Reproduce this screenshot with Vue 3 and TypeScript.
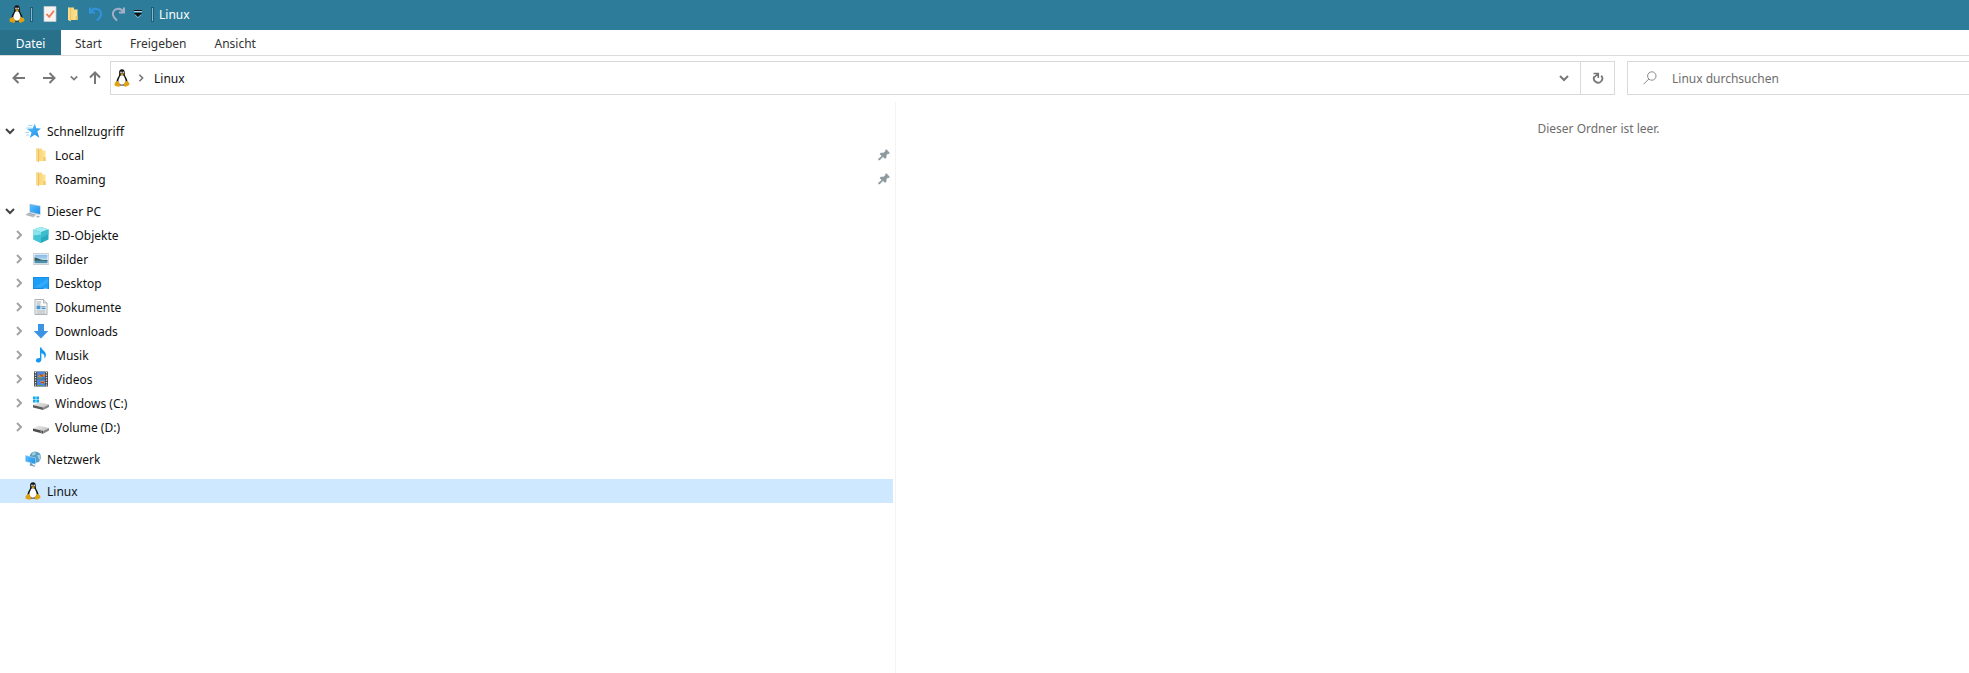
<script setup lang="ts">
import { ref } from 'vue'

interface TreeItem {
  label: string
  icon: string
  pinned?: boolean
  expandable?: boolean
}

interface TreeGroup extends TreeItem {
  open?: boolean
  children: TreeItem[]
}

const tabs: string[] = ['Start', 'Freigeben', 'Ansicht']
const selected = ref('Linux')
const search = ref('')

const groups = ref<TreeGroup[]>([
  {
    label: 'Schnellzugriff',
    icon: 'star',
    open: true,
    expandable: true,
    children: [
      { label: 'Local', icon: 'folder', pinned: true },
      { label: 'Roaming', icon: 'folder', pinned: true },
    ],
  },
  {
    label: 'Dieser PC',
    icon: 'pc',
    open: true,
    expandable: true,
    children: [
      { label: '3D-Objekte', icon: 'cube', expandable: true },
      { label: 'Bilder', icon: 'picture', expandable: true },
      { label: 'Desktop', icon: 'desktop', expandable: true },
      { label: 'Dokumente', icon: 'document', expandable: true },
      { label: 'Downloads', icon: 'download', expandable: true },
      { label: 'Musik', icon: 'music', expandable: true },
      { label: 'Videos', icon: 'video', expandable: true },
      { label: 'Windows (C:)', icon: 'drive-win', expandable: true },
      { label: 'Volume (D:)', icon: 'drive', expandable: true },
    ],
  },
  { label: 'Netzwerk', icon: 'network', children: [] },
  { label: 'Linux', icon: 'tux', children: [] },
])
</script>

<template>
  <div class="explorer">
    <svg class="sprite" aria-hidden="true">
      <defs>
        <linearGradient id="g-blue" x1="0" y1="0" x2="1" y2="1">
          <stop offset="0" stop-color="#5cc0ff" />
          <stop offset="1" stop-color="#1c8fe8" />
        </linearGradient>
        <linearGradient id="g-sky" x1="0" y1="0" x2="0" y2="1">
          <stop offset="0" stop-color="#7fb6e6" />
          <stop offset="1" stop-color="#e4f2fa" />
        </linearGradient>
        <linearGradient id="g-fold" x1="0" y1="0" x2="1" y2="0">
          <stop offset="0" stop-color="#f5cf6c" />
          <stop offset="1" stop-color="#ffe394" />
        </linearGradient>
        <linearGradient id="g-drive" x1="0" y1="0" x2="1" y2="1">
          <stop offset="0" stop-color="#f0f0f0" />
          <stop offset="1" stop-color="#bcbcbc" />
        </linearGradient>
      </defs>
      <symbol id="tux" viewBox="0 0 16 18">
        <path d="M8 .3C5.900.3 5 1.900 5.100 3.700c.1 1.900.1 2.600-.9 4.200C3.100 9.600 2.200 11.500 2.600 14l2.200 2.500h6.400l2.300-2.500c.3-2.400-.7-4.500-1.700-6.100-.9-1.500-1-2.200-1-4C10.800 1.900 10.100.3 8 .3z" fill="#171717" />
        <path d="M8 6.200c-1 0-1.800.2-2.100 1.400C5.300 9.300 4.200 10.800 4.300 12.800c.2 1.600 1.400 3 3.700 3s3.500-1.400 3.700-3c.1-2-1-3.500-1.600-5.200C9.700 6.400 9 6.200 8 6.200z" fill="#fff" />
        <ellipse cx="7" cy="3.600" rx=".8" ry="1" fill="#ddd" />
        <ellipse cx="9.200" cy="3.600" rx=".8" ry="1" fill="#ddd" />
        <path d="M6.200 5.100 8 4.200l2 .9L8 6.400z" fill="#d9a514" />
        <path d="M.9 13.500c1-.2 1.700-1.200 2.600-1.500 1 .2 1.400 1.700 2.600 3.200.6 1.300-.1 2.500-1.500 2.500-1.200 0-2.500-.8-3.700-1-.7-.4-.1-1.400-.3-2z" fill="#e0a211" />
        <path d="M15.100 13.500c-.9-.2-1.700-1.200-2.600-1.500-1 .2-2 1.500-2.500 3-.5 1.500.1 2.700 1.500 2.700 1.200 0 2.200-1 3.300-1.400 1.100-.6.700-1.200.3-2z" fill="#e0a211" />
      </symbol>
      <symbol id="star" viewBox="0 0 16 16">
        <path d="M3 2.500h4.500M1 5h5.500M.5 9.500H4M1 12h3" stroke="#9fd6fb" stroke-width="1" />
        <path d="m9.800.8 1.500 4.500 4.600.1-3.600 3.200 2 6.100-4.600-3-4.900 3.400 1.700-5.500-4.500-3.700 5.600-.3z" fill="url(#g-blue)" />
      </symbol>
      <symbol id="folder" viewBox="0 0 16 16">
        <path d="M3 1.500h6v2h3.500v10.500H3z" fill="url(#g-fold)" />
        <path d="M3 1.500l2.800 1v13L3 14z" fill="#f8dc8c" />
        <path d="M5.500 2.500v12.500" stroke="#e3b95a" stroke-width=".7" />
        <path d="M10.500 10h2v4h-2z" fill="#efc764" />
      </symbol>
      <symbol id="pc" viewBox="0 0 16 16">
        <path d="m4.500.8 11 2v9.200l-11-2.600z" fill="#a7c4da" />
        <path d="m5 1.500 10 1.900v7.700L5 8.700z" fill="url(#g-blue)" />
        <path d="m3.500 9.500 8.500 2-3.500 3L0 12z" fill="#c9d0d5" />
        <path d="m3.500 10.300 6.500 1.600M2.200 11.500l6.400 1.700" stroke="#8f999f" stroke-width=".7" />
        <path d="m12.500 12.500 2.500.7-1.700 1.500-2.500-.8z" fill="#aab5bc" />
      </symbol>
      <symbol id="cube" viewBox="0 0 16 16">
        <path d="M8 0l7.500 2.500v10L8 16 .5 12.500v-10z" fill="#27aabf" />
        <path d="M8 0l7.500 2.500L8 5.300.5 2.500z" fill="#a6eef3" />
        <path d="M.5 2.500 8 5.300V16L.5 12.500z" fill="#8be3ec" />
        <path d="m.5 8.500 7.500-1V16L.5 12.500z" fill="#46c4d6" />
        <path d="m8 5.300 7.500-2.800V7L8 11z" fill="#3cbccd" />
      </symbol>
      <symbol id="picture" viewBox="0 0 16 16">
        <path d="M.3 2.500h15.400v11H.3z" fill="#fff" stroke="#b2b8bd" stroke-width=".7" />
        <path d="M1.500 3.700h13v8.600h-13z" fill="url(#g-sky)" />
        <path d="M1.500 6.500c2 0 3.500 1 6 2 2.200.8 4.500.5 7 .5v1h-13z" fill="#335f58" />
        <path d="M1.500 9.600h13v2.700h-13z" fill="#5290ad" />
      </symbol>
      <symbol id="desktop" viewBox="0 0 16 16">
        <path d="M0 2h16v12H0z" fill="#1487dc" />
        <path d="M.6 2.600h14.800v10.100H.6z" fill="#1b9ff8" />
        <path d="M15.400 3.100v4L8 12.700H.6z" fill="#45b3fc" opacity=".55" />
        <path d="M10.500 13.300h4" stroke="#9cd8ff" stroke-width=".8" />
      </symbol>
      <symbol id="document" viewBox="0 0 16 16">
        <path d="M2 .5h8.500L14 4v11.500H2z" fill="#fafafa" stroke="#989ea2" stroke-width=".8" />
        <path d="M10.500.5V4H14" fill="#e4e7e9" stroke="#989ea2" stroke-width=".7" />
        <path d="M3.500 3H8M3.500 5h4M8 7.500h4.500M3.500 12h9M3.500 14h9" stroke="#8795a0" stroke-width=".8" />
        <path d="M3.500 6.500h4v3.800h-4zM8.500 8.500h4v1.800h-4z" fill="#4796cf" />
      </symbol>
      <symbol id="download" viewBox="0 0 16 16">
        <path d="M5 1h6v7h4.300L8 15.400.7 8H5z" fill="#3a93e3" />
      </symbol>
      <symbol id="music" viewBox="0 0 16 16">
        <path d="M7 .5h1.400c.3 2.700 4.900 3.800 4.500 7.700-.1 1.500-.9 2.600-1.700 3.400.9-3.200-.2-4.600-2.800-5.700v6.600c0 1.900-1.500 3.100-3.200 3.100-1.500 0-2.300-.9-2.300-2 0-1.600 1.800-2.900 4.100-2.400z" fill="#1298f5" />
      </symbol>
      <symbol id="video" viewBox="0 0 16 16">
        <path d="M1 .5h14v15H1z" fill="#474747" />
        <path d="M4 .8h8v7H4zM4 8.300h8v7H4z" fill="#4a86e4" />
        <path d="M2.500 1v14M13.500 1v14" stroke="#e4e4e4" stroke-width="1.300" stroke-dasharray="1.300 1.200" />
        <path d="m5 5 2-1.500 2 .5 3-2v3L9 6H5zM7 10.500l3-1 2 2-3 1.500z" fill="#ca9130" />
        <path d="m7 3.500 3 2M8 11.500h3" stroke="#c83c35" stroke-width="1.200" />
        <path d="M4 7.200h5M4 14.500h5" stroke="#63a347" stroke-width="1" />
      </symbol>
      <symbol id="drive" viewBox="0 0 16 16">
        <path d="m0 9.500 6-3 10 2.500-5.800 3z" fill="url(#g-drive)" />
        <path d="m0 9.500 10.200 2.500v2.800L0 12z" fill="#4a4a4a" />
        <path d="m10.200 12 5.800-3v2.500l-5.800 3.300z" fill="#858585" />
        <path d="m7.500 12.800 1.500.4" stroke="#c6e6b1" stroke-width=".8" />
      </symbol>
      <symbol id="drive-win" viewBox="0 0 16 16">
        <path d="m0 10 6-3 10 2.500-5.800 3z" fill="url(#g-drive)" />
        <path d="m0 10 10.200 2.500V15L0 12.400z" fill="#5a5a5a" />
        <path d="m10.200 12.500 5.800-3v2.400L10.200 15z" fill="#858585" />
        <path d="M0 1.500h2.700v2.700H0zM3.300 1.500H6v2.700H3.300zM0 4.800h2.700v2.700H0zM3.300 4.800H6v2.700H3.300z" fill="#13a9ee" />
      </symbol>
      <symbol id="network" viewBox="0 0 16 16">
        <circle cx="10.300" cy="6.100" r="5.700" fill="#5a9fc4" />
        <path d="M8 1.700c2-.9 3 0 2.700 1.200L8.300 4.400 6.500 4zM12 4.300l3.400-.5c.7 2 0 4.300-1 5.300z" fill="#a7d1df" />
        <path d="m.2 4 10.600 2.700v7L.2 10.700z" fill="#acd5ef" />
        <path d="m.8 4.800 9.400 2.400v5.500L.8 10.100z" fill="url(#g-blue)" />
        <path d="m5 12 2.500.6v1.300l3 .8-1 1-5-1.500.5-1z" fill="#6f95ad" />
      </symbol>
      <symbol id="pin" viewBox="0 0 12 12">
        <path d="M8.300.3 11.700 3.700 10.900 4.900 9.800 4.700 8.400 6.400v2.600L7 9.800 4.900 7.900 1.700 11.200H.3V9.800L3.600 7 1.600 5l1.200-1.200h2.700l1.800-1.500-.2-1z" fill="#8e9aa1" />
      </symbol>
      <symbol id="check-page" viewBox="0 0 16 16">
        <path d="M2 .5h12v15H2z" fill="#f6f3f2" stroke="#c9cdd0" stroke-width=".7" />
        <path d="m4.500 8 2.700 2.800 4.800-6" fill="none" stroke="#ef7853" stroke-width="1.800" />
      </symbol>
      <symbol id="undo" viewBox="0 0 16 16">
        <path d="M2 1.500v5h5M2.500 6C4 3.500 6.500 2.500 8.800 3c3 .5 4.700 3 4.200 6-.5 2.500-2.500 4-4 5.500" fill="none" stroke="currentColor" stroke-width="2" />
      </symbol>
      <symbol id="chevron-down" viewBox="0 0 10 10">
        <path d="m1 3 4 4 4-4" fill="none" stroke="currentColor" stroke-width="2" />
      </symbol>
      <symbol id="chevron-right" viewBox="0 0 10 10">
        <path d="m3 1 4 4-4 4" fill="none" stroke="currentColor" stroke-width="2" />
      </symbol>
      <symbol id="arrow" viewBox="0 0 14 14">
        <path d="M13 7H1.500M6.500 2l-5 5 5 5" fill="none" stroke="currentColor" stroke-width="2" />
      </symbol>
    </svg>

    <header class="title-bar">
      <svg class="tux"><use href="#tux" /></svg>
      <span class="grip" />
      <button class="quick" aria-label="Eigenschaften"><svg class="i16"><use href="#check-page" /></svg></button>
      <button class="quick" aria-label="Neuer Ordner"><svg class="i16"><use href="#folder" /></svg></button>
      <button class="quick undo" aria-label="Rückgängig"><svg class="i16"><use href="#undo" /></svg></button>
      <button class="quick redo" aria-label="Wiederholen"><svg class="i16"><use href="#undo" /></svg></button>
      <button class="quick more" aria-label="Schnellzugriff anpassen">
        <svg class="i8" viewBox="0 0 8 8"><path d="M0 .5h8" stroke="#111" /><path d="M0 1.500h8" stroke="#b7d3dd" /><path d="M0 3h8L4 7z" fill="#111" /><path d="m1 5 3 2.700L7 5" fill="none" stroke="#b7d3dd" stroke-width=".6" /></svg>
      </button>
      <span class="grip" />
      <h1 class="title">Linux</h1>
    </header>

    <nav class="ribbon">
      <button class="tab file">Datei</button>
      <button v-for="tab in tabs" :key="tab" class="tab">{{ tab }}</button>
    </nav>

    <div class="nav-row">
      <div class="history">
        <button class="nav" aria-label="Zurück"><svg class="i14"><use href="#arrow" /></svg></button>
        <button class="nav forward" aria-label="Vorwärts"><svg class="i14"><use href="#arrow" /></svg></button>
        <button class="nav recent" aria-label="Zuletzt besucht"><svg class="i8"><use href="#chevron-down" /></svg></button>
        <button class="nav up" aria-label="Nach oben"><svg class="i14"><use href="#arrow" /></svg></button>
      </div>
      <div class="address">
        <svg class="tux"><use href="#tux" /></svg>
        <svg class="i8 crumb-sep"><use href="#chevron-right" /></svg>
        <button class="crumb">Linux</button>
        <button class="nav drop" aria-label="Vorherige Orte"><svg class="i10"><use href="#chevron-down" /></svg></button>
        <button class="nav refresh" aria-label="Aktualisieren">
          <svg class="i12" viewBox="0 0 12 12"><path d="M9.200 3.600A4.200 4.200 0 1 1 2.500 4.200" fill="none" stroke="currentColor" stroke-width="1.800" /><path d="M1.500 1.500h4.800v4.500M6 1.800 2.500 5" fill="none" stroke="currentColor" stroke-width="1.600" /></svg>
        </button>
      </div>
      <label class="search">
        <svg class="i14" viewBox="0 0 14 14"><circle cx="8.800" cy="5" r="4.200" fill="none" stroke="#888" /><path d="M5.800 8 .5 13.300" stroke="#888" /></svg>
        <input v-model="search" type="text" placeholder="Linux durchsuchen" aria-label="Linux durchsuchen" />
      </label>
    </div>

    <div class="body">
      <aside class="sidebar">
        <ul v-for="group in groups" :key="group.label" class="group">
          <li class="row" :class="{ selected: selected === group.label }">
            <button v-if="group.expandable" class="toggle" :aria-label="group.label + ' umschalten'" @click="group.open = !group.open">
              <svg class="i10"><use :href="group.open ? '#chevron-down' : '#chevron-right'" /></svg>
            </button>
            <span v-else class="toggle" />
            <button class="entry" @click="selected = group.label">
              <svg :class="group.icon === 'tux' ? 'tux' : 'i16'"><use :href="'#' + group.icon" /></svg>
              <span class="label">{{ group.label }}</span>
            </button>
          </li>
          <template v-if="group.open">
            <li v-for="item in group.children" :key="item.label" class="row child" :class="{ selected: selected === item.label }">
              <button v-if="item.expandable" class="toggle" :aria-label="item.label + ' umschalten'">
                <svg class="i10"><use href="#chevron-right" /></svg>
              </button>
              <span v-else class="toggle" />
              <button class="entry" @click="selected = item.label">
                <svg class="i16"><use :href="'#' + item.icon" /></svg>
                <span class="label">{{ item.label }}</span>
              </button>
              <svg v-if="item.pinned" class="i12 pin"><use href="#pin" /></svg>
            </li>
          </template>
        </ul>
      </aside>
      <main class="content">
        <p class="empty">Dieser Ordner ist leer.</p>
      </main>
    </div>
  </div>
</template>

<style>
body {
  margin: 0;
  background: #fff;
}
</style>

<style scoped>
.explorer {
  display: flex;
  flex-direction: column;
  min-height: 100vh;
  overflow: hidden;
  font: 12px/16px "Noto Sans", "Open Sans", sans-serif;
  color: #111;
}
.sprite {
  position: absolute;
  width: 0;
  height: 0;
}
button {
  display: flex;
  align-items: center;
  padding: 0;
  border: 0;
  background: none;
  color: inherit;
  font: inherit;
}
svg {
  display: block;
  flex: none;
}
.i8 { width: 8px; height: 8px; }
.i10 { width: 10px; height: 10px; }
.i12 { width: 12px; height: 12px; }
.i14 { width: 14px; height: 14px; }
.i16 { width: 16px; height: 16px; }
.tux {
  width: 16px;
  height: 18px;
}
.title-bar {
  display: flex;
  align-items: center;
  height: 30px;
  padding: 0 9px 2px;
  box-sizing: border-box;
  background: #2d7d9a;
  color: #fff;
}
.grip {
  width: 1px;
  height: 13px;
  margin: 0 5px;
  border: 1px solid #1d5f79;
  background: #8bb5c5;
}
.quick {
  justify-content: center;
  width: 23px;
}
.undo { color: #3292df; }
.redo {
  color: #a5afc5;
  transform: scaleX(-1);
}
.more { width: 16px; }
.title {
  margin: 0;
  padding-top: 2px;
  font-size: 12px;
  font-weight: 400;
}
.ribbon {
  display: flex;
  height: 25px;
  border-bottom: 1px solid #dadbdc;
}
.tab {
  padding: 2px 14px 0;
  color: #333;
}
.file {
  justify-content: center;
  width: 61px;
  background: #29718b;
  color: #fff;
}
.nav-row {
  display: flex;
  height: 34px;
  padding-top: 5px;
}
.history {
  display: flex;
  width: 110px;
  padding-left: 12px;
  box-sizing: border-box;
}
.nav {
  justify-content: center;
  color: #777;
}
.history .nav {
  width: 14px;
}
.history .forward {
  margin-left: 16px;
  transform: scaleX(-1);
}
.history .recent {
  width: 8px;
  margin: 0 10px 0 14px;
}
.up svg {
  transform: rotate(90deg);
}
.address {
  display: flex;
  flex: 1;
  align-items: center;
  box-sizing: border-box;
  padding-left: 3px;
  border: 1px solid #d9d9d9;
}
.crumb-sep {
  margin: 0 9px 0 7px;
  color: #777;
}
.crumb {
  flex: 1;
  padding-top: 2px;
}
.drop {
  width: 32px;
  height: 100%;
}
.refresh {
  width: 34px;
  height: 100%;
  border-left: 1px solid #d9d9d9;
}
.search {
  display: flex;
  flex: 0 0 342px;
  align-items: center;
  gap: 15px;
  box-sizing: border-box;
  margin-left: 12px;
  padding-left: 15px;
  border: 1px solid #d9d9d9;
  border-right: 0;
}
.search input {
  flex: 1;
  min-width: 0;
  padding: 2px 0 0;
  border: 0;
  outline: 0;
  background: none;
  font: inherit;
}
.search input::placeholder {
  color: #6d6d6d;
  opacity: 1;
}
.body {
  display: flex;
  flex: 1;
  margin-top: 7px;
}
.sidebar {
  display: flex;
  flex: 0 0 896px;
  flex-direction: column;
  gap: 8px;
  max-width: 60%;
  box-sizing: border-box;
  padding: 17px 2px 0 0;
  border-right: 1px solid #f3f3f3;
}
.group {
  margin: 0;
  padding: 0;
  list-style: none;
}
.row {
  display: flex;
  align-items: center;
  height: 24px;
}
.child {
  padding-left: 9px;
}
.selected {
  background: #cde8ff;
}
.toggle {
  justify-content: center;
  width: 20px;
  height: 24px;
  margin-right: 5px;
  color: #444;
}
.child .toggle {
  color: #a3a3a3;
}
.child .entry {
  margin-left: -1px;
}
.entry {
  flex: 1;
  gap: 6px;
  height: 24px;
}
.label {
  padding-top: 2px;
}
.pin {
  margin-right: 3px;
}
.content {
  flex: 1;
  padding: 19px 0 0 332px;
}
.empty {
  margin: 0;
  color: #6d6d6d;
  text-align: center;
}
</style>
